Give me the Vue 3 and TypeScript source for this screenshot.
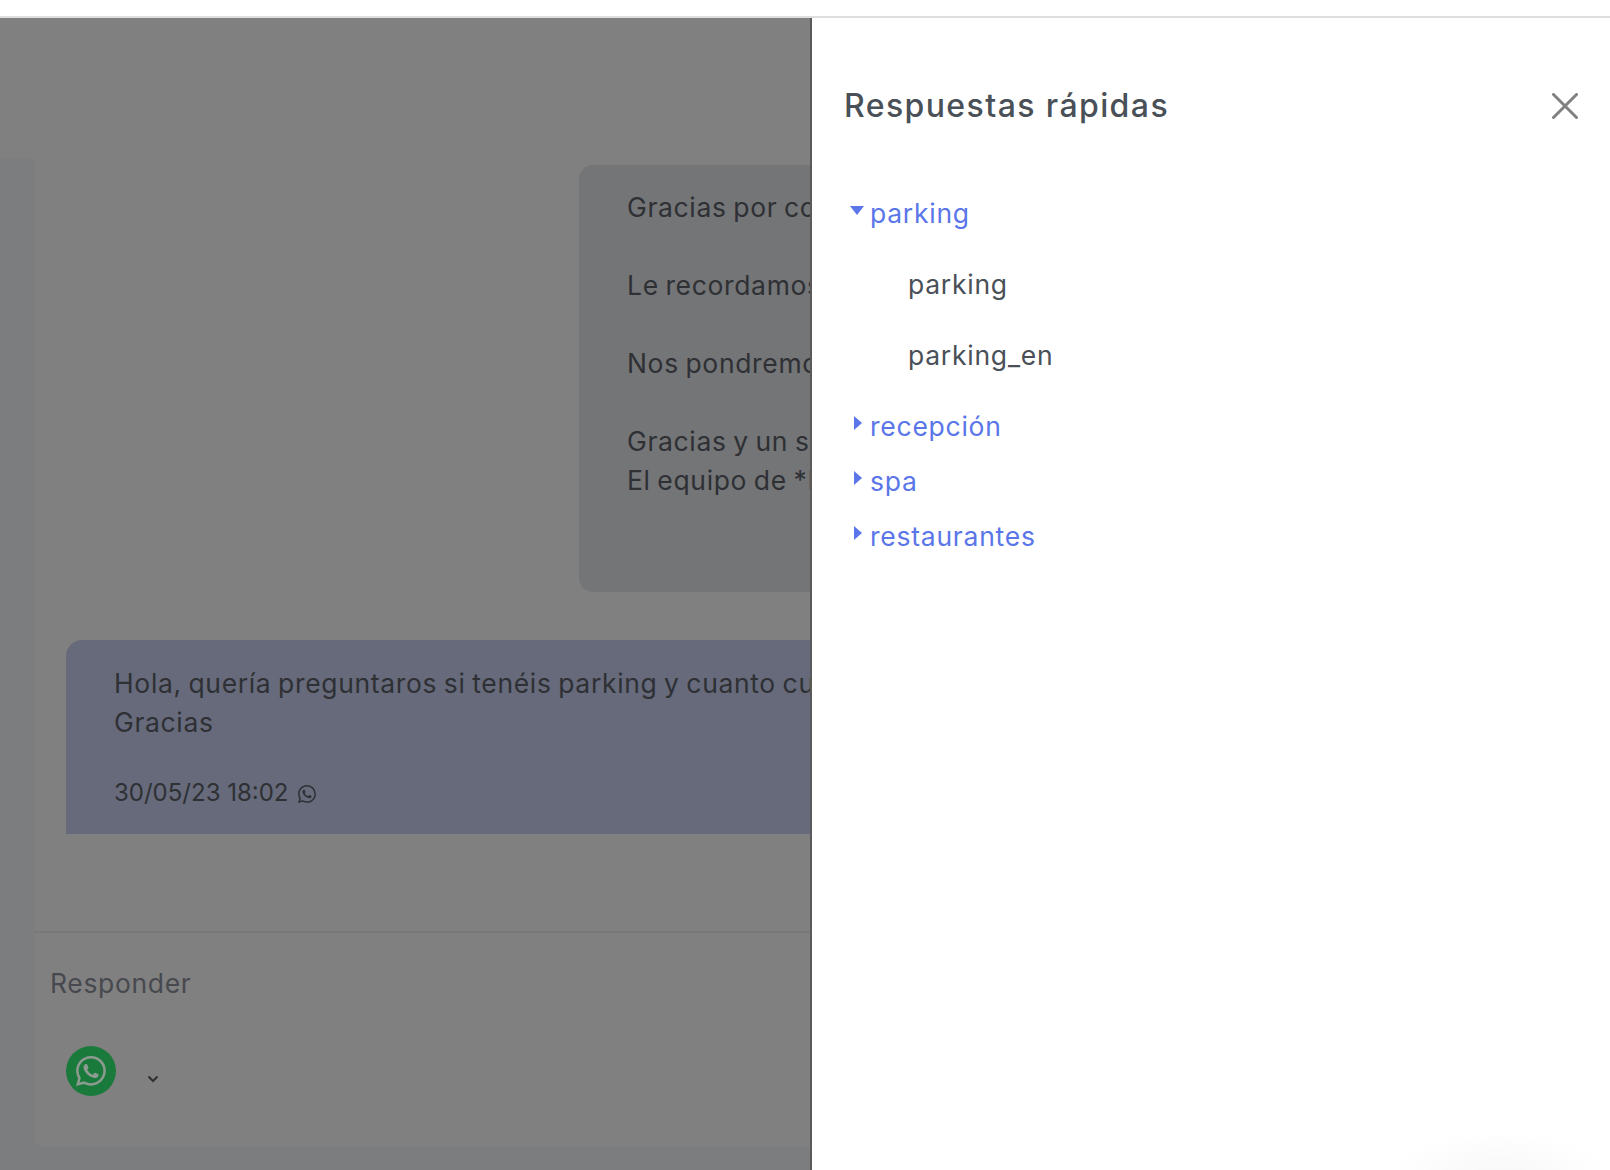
<script setup lang="ts">
const whatsapp =
  'M13.601 2.326A7.854 7.854 0 0 0 7.994 0C3.627 0 .068 3.558.064 7.926c0 1.399.366 2.76 1.057 3.965L0 16l4.204-1.102a7.933 7.933 0 0 0 3.79.965h.004c4.368 0 7.926-3.558 7.93-7.93A7.898 7.898 0 0 0 13.6 2.326zM7.994 14.521a6.573 6.573 0 0 1-3.356-.92l-.24-.144-2.494.654.666-2.433-.156-.251a6.56 6.56 0 0 1-1.007-3.505c0-3.626 2.957-6.584 6.591-6.584a6.56 6.56 0 0 1 4.66 1.931 6.557 6.557 0 0 1 1.928 4.66c-.004 3.639-2.961 6.592-6.592 6.592zm3.615-4.934c-.197-.099-1.17-.578-1.353-.646-.182-.065-.315-.099-.445.099-.133.197-.513.646-.627.775-.114.133-.232.148-.43.05-.197-.1-.836-.308-1.592-.985-.59-.525-.985-1.175-1.103-1.372-.114-.198-.011-.304.088-.403.087-.088.197-.232.296-.346.1-.114.133-.198.198-.33.065-.134.034-.248-.015-.347-.05-.099-.445-1.076-.612-1.47-.16-.389-.323-.335-.445-.34-.114-.007-.247-.007-.38-.007a.729.729 0 0 0-.529.247c-.182.198-.691.677-.691 1.654 0 .977.71 1.916.81 2.049.098.133 1.394 2.132 3.383 2.992.47.205.84.326 1.129.418.475.152.904.129 1.246.08.38-.058 1.171-.48 1.338-.943.164-.464.164-.86.114-.943-.049-.084-.182-.133-.38-.232z'

const sentLines: string[] = [
  'Gracias por co',
  '',
  'Le recordamos',
  '',
  'Nos pondremo',
  '',
  'Gracias y un s',
  'El equipo de *H',
]

const closedGroups: string[] = ['recepción', 'spa', 'restaurantes']
const children: string[] = ['parking', 'parking_en']
</script>

<template>
  <div class="page">
    <div class="topbar"></div>
    <div class="stage">
      <div class="backdrop">
        <div class="app-header"></div>
        <div class="app-body">
          <div class="strip"></div>
          <div class="conversation">
            <div class="card">
              <div class="thread">
                <div class="bubble-row-right">
                  <div class="bubble-sent">
                    <p v-for="(line, i) in sentLines" :key="i" class="line">{{ line || ' ' }}</p>
                  </div>
                </div>
                <div class="bubble-received">
                  <p class="line">Hola, quería preguntaros si tenéis parking y cuanto cu</p>
                  <p class="line">Gracias</p>
                  <div class="stamp">
                    <span>30/05/23 18:02</span>
                    <svg class="stamp-icon" viewBox="0 0 16 16" aria-hidden="true"><path :d="whatsapp" /></svg>
                  </div>
                </div>
              </div>
              <div class="reply">
                <div class="reply-label">Responder</div>
                <div class="channel">
                  <span class="channel-badge">
                    <svg viewBox="0 0 16 16" aria-hidden="true"><path :d="whatsapp" /></svg>
                  </span>
                  <svg class="chevron" viewBox="0 0 12 8" aria-hidden="true"><path d="M1.5 1.5 6 6l4.5-4.5" /></svg>
                </div>
              </div>
            </div>
          </div>
        </div>
      </div>

      <aside class="panel">
        <header class="panel-head">
          <h2 class="panel-title">Respuestas rápidas</h2>
          <svg class="close" viewBox="0 0 26 26" aria-label="Cerrar"><path d="M1.5 1.5 24.5 24.5M24.5 1.5 1.5 24.5" /></svg>
        </header>
        <ul class="tree">
          <li class="group group-open">
            <span class="caret-down"></span>
            <span class="group-name">parking</span>
          </li>
          <li v-for="child in children" :key="child" class="child">{{ child }}</li>
          <li v-for="name in closedGroups" :key="name" class="group group-closed">
            <span class="caret-right"></span>
            <span class="group-name">{{ name }}</span>
          </li>
        </ul>
        <div class="corner-glow"></div>
      </aside>
    </div>
  </div>
</template>

<style>
html, body { margin: 0; background: #fff; }
</style>

<style scoped>
.page {
  width: 1610px;
  height: 1170px;
  display: flex;
  flex-direction: column;
  overflow: hidden;
  font-family: Inter, "Noto Sans", sans-serif;
  background: #fff;
}
.topbar {
  height: 16px;
  flex: none;
  background: #fff;
  border-bottom: 2px solid #dedede;
}
.stage { flex: 1; display: flex; min-height: 0; }
.backdrop {
  width: 810px;
  flex: none;
  display: flex;
  flex-direction: column;
  background: #808080;
  overflow: hidden;
}
.app-header { height: 140px; flex: none; }
.app-body { flex: 1; display: flex; min-height: 0; }
.strip { width: 34px; flex: none; background: #7c7d7e; }
.conversation {
  flex: 1;
  min-width: 0;
  background: #7c7d7e;
  padding-bottom: 23px;
  display: flex;
}
.card {
  flex: 1;
  min-width: 0;
  background: #808080;
  border-bottom-left-radius: 10px;
  display: flex;
  flex-direction: column;
}
.thread {
  height: 775px;
  flex: none;
  box-sizing: border-box;
  padding-top: 7px;
  border-bottom: 2px solid #797979;
}
.bubble-row-right { display: flex; height: 427px; }
.bubble-sent {
  margin-left: 545px;
  width: 400px;
  flex: none;
  height: 427px;
  box-sizing: border-box;
  padding: 23px 0 0 48px;
  background: #747577;
  border-radius: 14px;
}
.line {
  margin: 0;
  font-size: 26.5px;
  letter-spacing: 0.65px;
  word-spacing: -1.4px;
  line-height: 39px;
  color: #2e3034;
  white-space: pre;
}
.bubble-received {
  margin: 48px 0 0 32px;
  height: 194px;
  width: 900px;
  box-sizing: border-box;
  padding: 24px 0 0 48px;
  background: #666a7b;
  border-top-left-radius: 16px;
}
.stamp {
  margin-top: 31px;
  display: flex;
  align-items: center;
  gap: 9px;
  font-size: 24px;
  line-height: 39px;
  color: #2e3034;
}
.stamp-icon { width: 18px; height: 18px; fill: #2e3034; margin-top: 3px; }
.reply { padding: 31px 0 0 16px; }
.reply-label {
  font-size: 26.5px;
  letter-spacing: 0.65px;
  line-height: 39px;
  color: #47494f;
}
.channel {
  margin: 43px 0 0 16px;
  display: flex;
  align-items: center;
  gap: 31px;
}
.channel-badge {
  width: 50px;
  height: 50px;
  border-radius: 50%;
  background: #1a7a3c;
  display: flex;
  align-items: center;
  justify-content: center;
}
.channel-badge svg { width: 30px; height: 30px; fill: #8c9a90; }
.chevron {
  width: 12px;
  height: 8px;
  margin-top: 15px;
  fill: none;
  stroke: #2e3034;
  stroke-width: 2;
}
.panel {
  position: relative;
  flex: 1;
  min-width: 0;
  background: #fff;
  border-left: 2px solid #5a5a5a;
  box-sizing: border-box;
  overflow: hidden;
}
.panel-head {
  display: flex;
  align-items: center;
  justify-content: space-between;
  padding: 63px 32px 0 32px;
  height: 50px;
}
.panel-title {
  margin: 0;
  font-size: 32px;
  letter-spacing: 1.4px;
  line-height: 50px;
  font-weight: 500;
  color: #495057;
}
.close {
  width: 26px;
  height: 26px;
  fill: none;
  stroke: #808080;
  stroke-width: 3;
  stroke-linecap: round;
}
.tree {
  list-style: none;
  margin: 0;
  padding: 54px 0 0 38px;
}
.group {
  display: flex;
  align-items: center;
  height: 55px;
  font-size: 26.5px;
  letter-spacing: 0.75px;
  color: #5a76e8;
}
.group-open { margin-bottom: 9px; }
.group-open .group-name { margin-left: 6px; }
.child + .group-closed { margin-top: 7px; }
.caret-down {
  width: 0;
  height: 0;
  margin-top: -4px;
  border-left: 7.5px solid transparent;
  border-right: 7.5px solid transparent;
  border-top: 9px solid #5a76e8;
}
.caret-right {
  width: 0;
  height: 0;
  margin: -5px 8px 0 4px;
  border-top: 7.5px solid transparent;
  border-bottom: 7.5px solid transparent;
  border-left: 8px solid #5a76e8;
}
.child {
  height: 71px;
  line-height: 71px;
  padding-left: 58px;
  font-size: 26.5px;
  letter-spacing: 0.75px;
  color: #495057;
}
.corner-glow {
  position: absolute;
  left: 578px;
  bottom: -60px;
  width: 220px;
  height: 100px;
  border-radius: 50%;
  background: radial-gradient(closest-side, #f7f7f7, #ffffff);
}
</style>
